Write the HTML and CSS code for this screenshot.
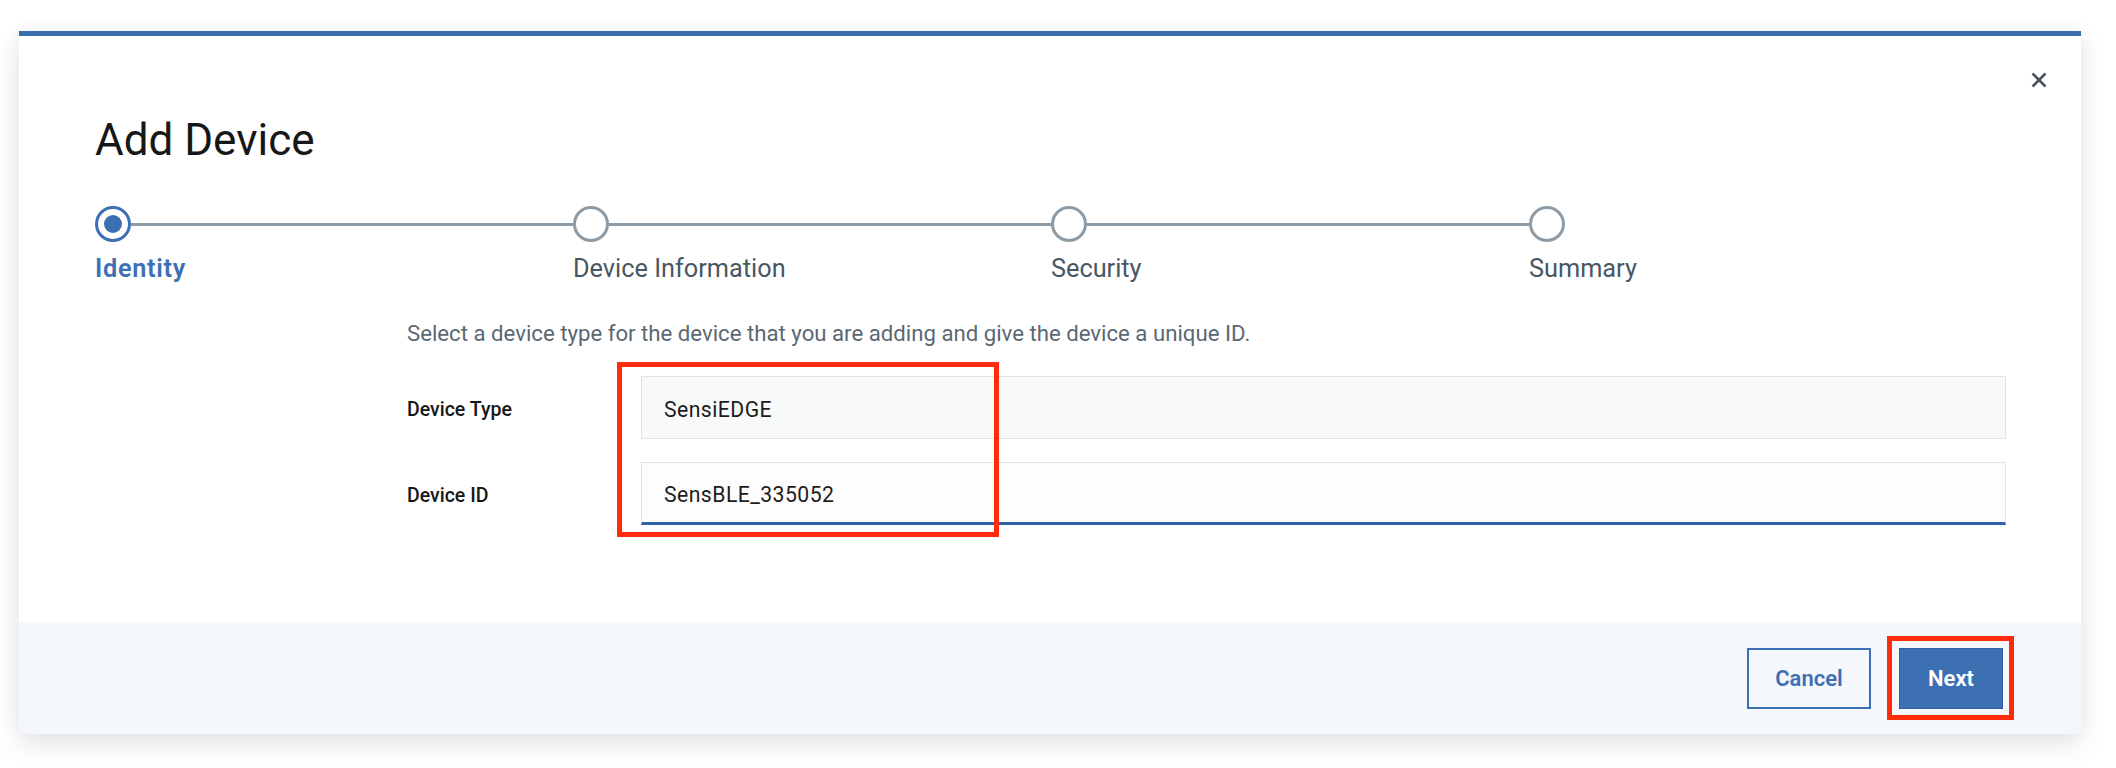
FILE: index.html
```html
<!DOCTYPE html>
<html lang="en">
<head>
<meta charset="utf-8">
<title>Add Device</title>
<link rel="stylesheet" href="styles.css">
</head>
<body>
<div class="modal">
  <button class="close" aria-label="Close">
    <svg width="16" height="16" viewBox="0 0 16 16"><path d="M1.5 1.5 L14.5 14.5 M14.5 1.5 L1.5 14.5" stroke="#46545f" stroke-width="2.6" fill="none"/></svg>
  </button>
  <div class="header">
    <h1 class="title">Add Device</h1>
  </div>
  <ol class="progress">
    <li class="step current">
      <div class="track"><span class="dot"></span><span class="line"></span></div>
      <span class="step-label">Identity</span>
    </li>
    <li class="step">
      <div class="track"><span class="dot"></span><span class="line"></span></div>
      <span class="step-label">Device Information</span>
    </li>
    <li class="step">
      <div class="track"><span class="dot"></span><span class="line"></span></div>
      <span class="step-label">Security</span>
    </li>
    <li class="step last">
      <div class="track"><span class="dot"></span></div>
      <span class="step-label">Summary</span>
    </li>
  </ol>
  <div class="body">
    <p class="desc">Select a device type for the device that you are adding and give the device a unique ID.</p>
    <div class="row">
      <label class="label">Device Type</label>
      <div class="field readonly">SensiEDGE</div>
    </div>
    <div class="row">
      <label class="label">Device ID</label>
      <div class="field focused">SensBLE_335052</div>
    </div>
  </div>
  <div class="footer">
    <button class="btn secondary">Cancel</button>
    <button class="btn primary">Next</button>
  </div>
</div>
<div class="mark mark-fields"></div>
<div class="mark mark-next"></div>
</body>
</html>
```
FILE: styles.css
```css
* { box-sizing: border-box; }
html, body { margin: 0; padding: 0; background: #ffffff; }
body {
  width: 2116px;
  height: 768px;
  overflow: hidden;
  position: relative;
  font-family: Roboto, "Liberation Sans", sans-serif;
}
.modal {
  position: relative;
  margin: 31px 35px 0 19px;
  width: 2062px;
  height: 703px;
  background: #ffffff;
  border-top: 5px solid #3a6cb0;
  box-shadow: 0 10px 26px rgba(0,0,0,0.10), 0 0 20px rgba(0,0,0,0.04);
  display: flex;
  flex-direction: column;
}
.close {
  position: absolute;
  top: 36px;
  right: 34px;
  width: 16px;
  height: 16px;
  padding: 0;
  border: 0;
  background: none;
  display: flex;
}
.header {
  padding: 79px 74px 0 76px;
}
.title {
  margin: 0;
  font-size: 44px;
  line-height: 50px;
  font-weight: 400;
  color: #171717;
}
.progress {
  list-style: none;
  margin: 41px 74px 0 76px;
  padding: 0;
  display: flex;
}
.step {
  width: 478px;
  display: flex;
  flex-direction: column;
}
.step.last { width: auto; }
.track {
  display: flex;
  align-items: center;
  height: 36px;
}
.dot {
  width: 36px;
  height: 36px;
  border-radius: 50%;
  border: 3px solid #8c9ba5;
  background: #ffffff;
  flex: none;
  display: flex;
  align-items: center;
  justify-content: center;
}
.current .dot { border-color: #3d70b2; }
.current .dot::after {
  content: "";
  width: 18px;
  height: 18px;
  border-radius: 50%;
  background: #3d70b2;
}
.line {
  flex: 1;
  height: 3px;
  background: #8c9ba5;
}
.step-label {
  margin-top: 13px;
  font-size: 25.3px;
  line-height: 28px;
  color: #475763;
  white-space: nowrap;
}
.current .step-label {
  color: #3d70b2;
  font-weight: 600;
  letter-spacing: 0.7px;
}
.body {
  padding: 0 75px 0 388px;
}
.desc {
  margin: 37px 0 30px;
  font-size: 22.2px;
  line-height: 26px;
  color: #5a6872;
}
.row {
  display: flex;
  align-items: center;
  margin-bottom: 23px;
}
.label {
  width: 234px;
  flex: none;
  padding-top: 4px;
  font-size: 19.5px;
  font-weight: 500;
  color: #171717;
}
.field {
  flex: 1;
  height: 63px;
  border: 1px solid #dfe3e6;
  padding: 4px 22px 0;
  display: flex;
  align-items: center;
  font-size: 21.2px;
  letter-spacing: 0.45px;
  color: #1c1c1c;
}
.field.readonly { background: #f8f9f9; }
.field.focused {
  background: #fdfdfd;
  border-bottom: 3px solid #2f62aa;
}
.footer {
  margin-top: auto;
  height: 112px;
  background: #f4f7fb;
  display: flex;
  justify-content: flex-end;
  align-items: flex-start;
  gap: 28px;
  padding: 26px 78px 0 0;
}
.btn {
  height: 61px;
  font-family: Roboto, "Liberation Sans", sans-serif;
  font-size: 22px;
  font-weight: 600;
  padding: 0;
  cursor: pointer;
}
.btn.secondary {
  width: 124px;
  background: transparent;
  border: 2px solid #3d70b2;
  color: #3d70b2;
}
.btn.primary {
  width: 104px;
  background: #3d70b2;
  border: 1px solid #30609f;
  color: #ffffff;
}
.mark {
  position: absolute;
  border: 5px solid #ff2b0a;
  pointer-events: none;
}
.mark-fields {
  left: 617px;
  top: 362px;
  width: 382px;
  height: 175px;
}
.mark-next {
  left: 1887px;
  top: 636px;
  width: 127px;
  height: 84px;
}
```
